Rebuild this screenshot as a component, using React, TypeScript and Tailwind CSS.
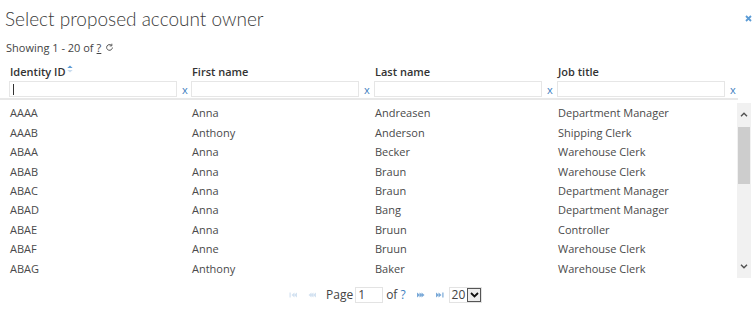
import { ReactNode } from "react";

const rows = [
  ["AAAA", "Anna", "Andreasen", "Department Manager"],
  ["AAAB", "Anthony", "Anderson", "Shipping Clerk"],
  ["ABAA", "Anna", "Becker", "Warehouse Clerk"],
  ["ABAB", "Anna", "Braun", "Warehouse Clerk"],
  ["ABAC", "Anna", "Braun", "Department Manager"],
  ["ABAD", "Anna", "Bang", "Department Manager"],
  ["ABAE", "Anna", "Bruun", "Controller"],
  ["ABAF", "Anne", "Bruun", "Warehouse Clerk"],
  ["ABAG", "Anthony", "Baker", "Warehouse Clerk"],
];

const columns = [
  { label: "Identity ID", width: "w-[182px]", sorted: true },
  { label: "First name", width: "w-[183px]", sorted: false },
  { label: "Last name", width: "w-[183px]", sorted: false },
  { label: "Job title", width: "w-[180px]", sorted: false },
];

function SortIcon() {
  return (
    <svg className="ml-[2px] mt-[-6px] h-[8px] w-[6px]" viewBox="0 0 6 9">
      <path d="M0 3.5 3 0.5 6 3.5Z" fill="#5b9bd5" />
      <path d="M0 5.5 3 8.5 6 5.5Z" fill="#c9dcef" />
    </svg>
  );
}

function RefreshIcon() {
  return (
    <svg className="ml-[4px] h-[9px] w-[9px]" fill="none" viewBox="0 0 10 10">
      <path d="M8.2 5a3.2 3.2 0 1 1-1-2.4" stroke="#555" strokeWidth="1.1" />
      <path d="M7.6 0.8v2.4H5.2" stroke="#555" strokeWidth="1.1" />
    </svg>
  );
}

function ClearX({ children }: { children?: ReactNode }) {
  return (
    <span className="ml-[5px] text-[11px] leading-none text-[#3f7fc0]">{children ?? "x"}</span>
  );
}

function PagerIcon({ dir, end, faded }: { dir: "l" | "r"; end: boolean; faded: boolean }) {
  const fill = faded ? "#d3e2f1" : "#7aa9d8";
  return (
    <svg className="h-[6px] w-[9px]" viewBox="0 0 9 6">
      {dir === "l" ? (
        <>
          {end ? <rect x="0.5" y="0.5" width="1.2" height="5" fill={fill} /> : <path d="M0.5 3 3.5 0.5v5Z" fill={fill} />}
          <path d="M2.5 3 5.5 0.5v5Z" fill={fill} />
          <path d="M5 3 8 0.5v5Z" fill={fill} />
        </>
      ) : (
        <>
          <path d="M1 0.5 4 3 1 5.5Z" fill={fill} />
          <path d="M3.5 0.5 6.5 3 3.5 5.5Z" fill={fill} />
          {end ? <rect x="7.3" y="0.5" width="1.2" height="5" fill={fill} /> : <path d="M5.5 0.5 8.5 3 5.5 5.5Z" fill={fill} />}
        </>
      )}
    </svg>
  );
}

export default function App() {
  return (
    <div className="h-[319px] w-[755px] overflow-hidden bg-white font-['Open_Sans',sans-serif] text-[11px] text-[#4a4a4a]">
      <div className="flex items-start justify-between pl-[5px] pr-[3px] pt-[5px]">
        <h1 className="font-['Lato',sans-serif] text-[19px] font-light leading-[28px] text-[#3a3a3a]">
          Select proposed account owner
        </h1>
        <svg className="mt-[10px] h-[7px] w-[7px]" viewBox="0 0 7 7">
          <path d="M1 1 6 6M6 1 1 6" stroke="#5b9bd5" strokeWidth="1.8" />
        </svg>
      </div>

      <div className="mt-[6px] flex items-center pl-[6px] leading-[17px] text-[#444]">
        <span>Showing 1 - 20 of </span>
        <span className="ml-[3px] underline">?</span>
        <RefreshIcon />
      </div>

      <div className="mt-[8px] flex pl-[9px]">
        {columns.map((c) => (
          <div key={c.label} className={`${c.width} flex flex-col`}>
            <div className="flex items-center pl-[1px] font-semibold leading-[16px] text-[#333]">
              {c.label}
              {c.sorted ? <SortIcon /> : null}
            </div>
            <div className="mt-[1px] flex items-center">
              <div className="flex h-[16px] w-[168px] items-center border border-[#e6e6e6] bg-white pl-[3px]">
                {c.sorted ? <div className="h-[11px] w-px bg-[#333]" /> : null}
              </div>
              <ClearX />
            </div>
          </div>
        ))}
      </div>

      <div className="mt-[1px] h-[2px] w-[738px] bg-[#e8e8e8]" />

      <div className="mt-[3px] flex h-[175px]">
        <div className="flex w-[737px] flex-col pl-[9px]">
          {rows.map((r) => (
            <div key={r[0]} className="flex h-[19.44px] items-center">
              {r.map((cell, i) => (
                <div key={i} className={`${columns[i].width} pl-[1px] leading-[17px]`}>
                  {cell}
                </div>
              ))}
            </div>
          ))}
        </div>
        <div className="flex w-[14px] flex-col items-center bg-[#f1f1f1]">
          <svg className="mt-[9px] h-[5px] w-[8px]" fill="none" viewBox="0 0 8 5">
            <path d="M1 4.2 4 1.2 7 4.2" stroke="#505050" strokeWidth="1.4" />
          </svg>
          <div className="mt-[10px] h-[57px] w-[12px] bg-[#cdcdcd]" />
          <div className="flex-1" />
          <svg className="mb-[9px] h-[5px] w-[8px]" fill="none" viewBox="0 0 8 5">
            <path d="M1 0.8 4 3.8 7 0.8" stroke="#505050" strokeWidth="1.4" />
          </svg>
        </div>
      </div>

      <div className="ml-[289px] mt-[9px] flex h-[16px] items-center text-[12px] text-[#444]">
        <PagerIcon dir="l" end faded />
        <span className="ml-[10px]">
          <PagerIcon dir="l" end={false} faded />
        </span>
        <span className="ml-[9px] leading-none">Page</span>
        <div className="ml-[2px] flex h-[16px] w-[28px] items-center border border-[#e3e3e3] pl-[2px] leading-none">
          1
        </div>
        <span className="ml-[3px] leading-none">of</span>
        <span className="ml-[3px] leading-none text-[#3f7fc0]">?</span>
        <span className="ml-[10px]">
          <PagerIcon dir="r" end={false} faded={false} />
        </span>
        <span className="ml-[10px]">
          <PagerIcon dir="r" end faded={false} />
        </span>
        <div className="ml-[5px] flex h-[16px] items-center border border-[#e3e3e3] leading-none">
          <span className="px-[2px]">20</span>
          <div className="flex h-[14px] w-[14px] items-center justify-center border border-[#555] bg-[#eee]">
            <svg className="h-[6px] w-[9px]" fill="none" viewBox="0 0 9 6">
              <path d="M1 1 4.5 4.5 8 1" stroke="#111" strokeWidth="1.8" />
            </svg>
          </div>
        </div>
      </div>
    </div>
  );
}
